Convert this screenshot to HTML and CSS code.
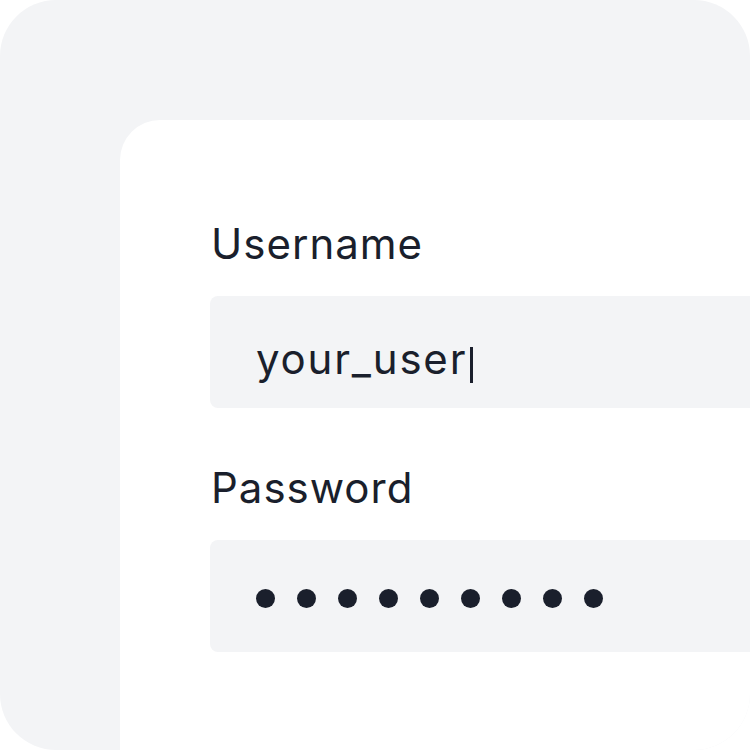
FILE: index.html
```html
<!DOCTYPE html>
<html>
<head>
    <title>Login form</title>
    <link rel="stylesheet" href="styles.css">
</head>
<body>
    <div class="frame">
        <div class="card">
            <div class="field">
                <div class="label">Username</div>
                <div class="input">
                    <span class="value">your_user</span><span class="caret"></span>
                </div>
            </div>

            <div class="field">
                <div class="label">Password</div>
                <div class="input dots">
                    <span class="dot"></span>
                    <span class="dot"></span>
                    <span class="dot"></span>
                    <span class="dot"></span>
                    <span class="dot"></span>
                    <span class="dot"></span>
                    <span class="dot"></span>
                    <span class="dot"></span>
                    <span class="dot"></span>
                </div>
            </div>
        </div>
    </div>
</body>
</html>
```

FILE: styles.css
```css
body {
    margin: 0;
    padding: 0;
    background: #fff;
    font-family: 'Inter', 'Noto Sans', sans-serif;
    color: #1a1f2c;
}

.frame {
    width: 750px;
    height: 750px;
    box-sizing: border-box;
    padding: 120px 0 0 120px;
    background: #f3f4f6;
    border-radius: 56px;
    overflow: hidden;
}

.card {
    height: 100%;
    box-sizing: border-box;
    padding: 100px 0 0 90px;
    background: #fff;
    border-top-left-radius: 40px;
    display: flex;
    flex-direction: column;
    gap: 56px;
}

.field {
    display: flex;
    flex-direction: column;
    gap: 28px;
}

.label {
    font-size: 42px;
    line-height: 48px;
    letter-spacing: 1px;
    padding-left: 1px;
}

.input {
    height: 112px;
    box-sizing: border-box;
    padding: 14px 0 0 46px;
    background: #f3f4f6;
    border-radius: 8px 0 0 8px;
    display: flex;
    align-items: center;
}

.value {
    font-size: 42px;
    line-height: 48px;
    letter-spacing: 1.8px;
}

.caret {
    width: 3px;
    height: 36px;
    margin: 12px 0 0 3px;
    background: #1a1f2c;
}

.dots {
    padding-top: 4px;
    gap: 22px;
}

.dot {
    width: 19px;
    height: 19px;
    border-radius: 50%;
    background: #1a1f2c;
}
```
